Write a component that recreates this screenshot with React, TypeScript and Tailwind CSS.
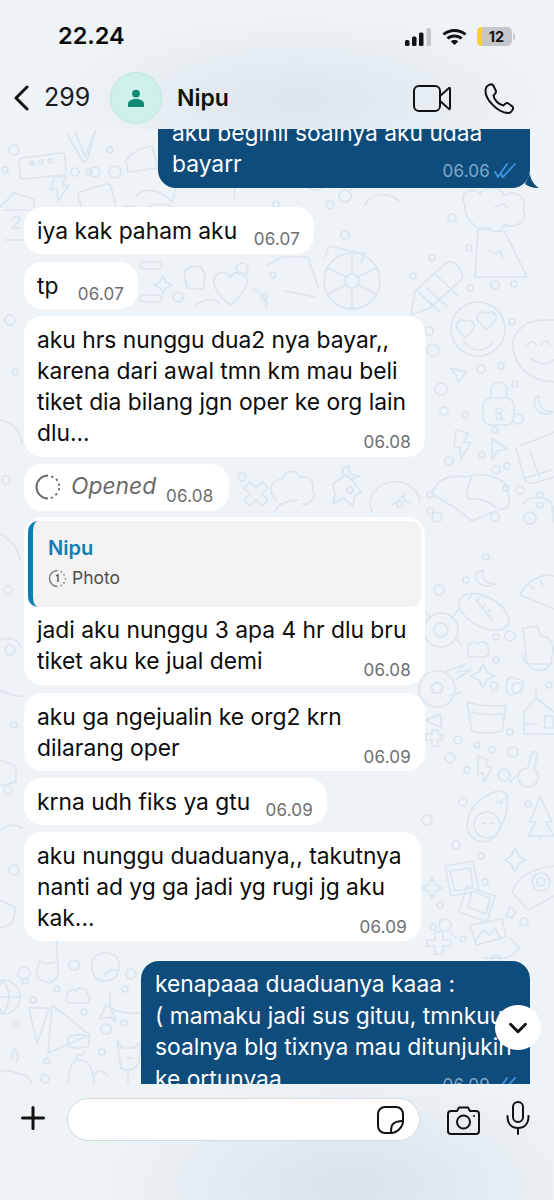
import React from "react";
import { ChevronDown, Plus } from "lucide-react";

const font = "font-['Inter','Noto_Sans',sans-serif]";

// loose circles scattered between the doodles
const dots = [
  [14, 150, 5], [110, 150, 3], [115, 172, 6], [75, 172, 4], [89, 172, 3], [95, 172, 5], [452, 218, 4], [469, 248, 3], [432, 258, 3],
  [413, 276, 3], [495, 285, 4], [514, 284, 3], [470, 288, 3], [512, 322, 3], [429, 331, 4], [433, 350, 6], [481, 369, 4], [501, 366, 3],
  [515, 384, 3], [441, 389, 6], [444, 411, 4], [465, 415, 3], [518, 419, 5], [495, 430, 3], [482, 455, 3], [449, 461, 4], [496, 470, 4],
  [507, 466, 3], [506, 488, 3], [520, 490, 4], [430, 495, 3], [437, 517, 5], [495, 517, 4], [540, 495, 3], [466, 580, 3], [486, 557, 3],
  [439, 590, 5], [510, 636, 5], [496, 637, 3], [496, 660, 3], [494, 686, 4], [517, 688, 5], [549, 685, 3], [458, 740, 4], [510, 732, 3],
  [477, 745, 3], [492, 750, 3], [513, 752, 5], [467, 770, 3], [504, 775, 6], [463, 802, 4], [427, 820, 5], [528, 804, 3], [456, 845, 4],
  [481, 856, 3], [485, 882, 3], [440, 905, 3], [433, 927, 3], [524, 922, 4], [496, 960, 5], [463, 939, 3], [350, 490, 3], [400, 504, 3],
  [242, 477, 4], [430, 511, 3], [555, 510, 3], [5, 170, 3], [24, 973, 6], [74, 965, 5], [25, 981, 3], [57, 989, 3], [33, 1000, 3], [84, 1012, 3],
  [16, 1024, 3], [106, 1029, 5], [124, 1023, 3], [102, 1052, 3], [47, 1061, 3], [45, 1079, 4], [131, 974, 5], [125, 989, 3], [8, 590, 4],
  [10, 650, 5], [14, 725, 3], [8, 790, 4], [14, 870, 5], [6, 480, 4], [15, 372, 3], [10, 320, 5], [330, 205, 4], [276, 204, 3],
  [242, 269, 6], [264, 297, 3], [178, 297, 5], [273, 275, 3], [345, 235, 4],
];

const Doodles = () => (
  <svg className="absolute inset-0" width="554" height="955" viewBox="0 129 554 955" fill="none" stroke="#dae5ee" strokeWidth="1.7" strokeLinecap="round" strokeLinejoin="round">
    {dots.map(([x, y, r], i) => (
      <circle key={i} cx={x} cy={y} r={r} />
    ))}
    {/* right column */}
    <path d="M478 229 L505 232 L527 277 L475 277 Z M489 250 q6 6 11 1 l3 7 M465 205 c-8-12 8-20 15-11 c3-8 22-8 24 2 c10-8 25 2 19 14 c6 12-10 20-18 14 c-2 8-12 10-17 3 c-12 6-24-10-23-22 z M495 208 q7-8 13 0" />
    <path d="M411 315 l4-24 l30-27 c4-3 8-3 12 1 l4 6 c2 3 2 7-1 10 l-30 27 z M418 292 l22 20 M426 288 l22 19 M436 275 l22 21" />
    <circle cx="478" cy="329" r="27" />
    <path d="M464 342 q14 16 30 0 M457 329 c-3-8 6-12 8-7 c4-4 12 0 8 8 l-8 8 z M478 321 c-4-7 5-12 9-7 c4-5 12 0 8 7 l-8 9 z" />
    <path d="M515 356 c-8-20 8-36 28-36 l14 0 M557 382 c-20 0-36-8-42-26 M527 345 q5-7 9 0 M541 345 q5-7 9 0 M530 358 q12 10 24 2" />
    <rect x="483" y="398" width="31" height="27" rx="8" />
    <path d="M491 398 v-8 a8 8 0 0 1 16 0 v8 M499 408 a3 3 0 1 0 .1 0 M499 412 l-3 7 h7 z" />
    <path d="M535 398 c-3 12 8 20 18 14 c-10 0-16-6-14-16 z M456 430 l12 3 l-4 10 l7-1 l-10 17 l-1-12 l-6 1 z M492 438 l15 11 l-9 2 l-6 9 z M450 368 l16 4 l-8 11 l-2-8 z" />
    <path d="M520 446 l34-14 M516 448 l8 30 q2 6 10 5 l20-6 M524 478 l28-8 M530 452 l10 26" />
    <path d="M432 494 c4-16 20-20 34-17 c12-5 30-2 38 6 c6 8 6 20 4 24 l-18 6 l-18 8 l-18-14 z M472 477 c-4 8-6 16-4 22 M468 499 q14-2 28 8" />
    <path d="M522 504 c8-8 18-8 26-4 c8 6 6 16 4 24 M530 512 a6 6 0 1 0 .1 0 M540 502 a3 3 0 1 0 .1 0" />
    <path d="M477 572 c-4 10 6 18 18 12 c-8 0-14-4-12-14 z" />
    <ellipse cx="484" cy="612" rx="27" ry="15" transform="rotate(28 484 612)" />
    <path d="M476 600 l16 20 M480 598 l-3 4 M485 604 l-3 4 M490 610 l-3 4 M471 596 l-3 4" />
    <path d="M520 595 c6-14 24-24 36-18 M520 595 l34 14 M530 585 l4 4 M540 580 l3 6" />
    <circle cx="441" cy="630" r="17" />
    <circle cx="441" cy="630" r="7" />
    <path d="M430 618 l-6-8 M452 618 l6-8 M425 640 l-5 6 M457 640 l5 6" />
    <path d="M468 650 c-2-8 8-10 10-6 c3-4 12-2 10 6 c2 5-2 7-6 7 h-10 c-4 0-6-4-4-7 z M523 628 l14-2 l4 10 c8 0 12 6 12 14 l-2 14 l-24 0 z M522 655 c4 12 18 22 28 10" />
    <circle cx="437" cy="689" r="18" />
    <path d="M431 686 l6-4 l6 4 l-2 7 h-8 z M445 672 l20-8 l-8 8 l14-2 l-16 10 M449 696 l12-4" />
    <path d="M483 664 l4 8 l8 4 l-8 4 l-4 8 l-4-8 l-8-4 l8-4 z M507 684 c-2-6 6-8 8-5 c6-2 10 4 8 8 c-2 6-8 6-10 8 c-6 0-8-6-6-11 z" />
    <path d="M467 702 q20 6 39 3 l-4 26 q-14 4-30 0 z M470 712 q16 4 33 2 M440 714 l-14 6 l16 8 z" />
    <path d="M524 712 l12-14 v-12 M536 698 l18 14 M524 712 v22 h30 M525 724 h12 M525 734 h12 M545 716 h8 v12 h-8 z" />
    <path d="M426 734 h6 v-4 h6 v4 h4 v6 h-4 v6 h-6 v-6 h-6 z M444 758 l6-6 l6 6 l-6 6 z M478 756 l10 4 l-2 6 l6 2 l-8 14 l-1-9 l-5 1 z" />
    <path d="M528 768 l4-16 h6 l-4 18 c6 2 6 12-2 16 c-6 4-14-2-14-10 c0-4 4-8 10-8 M516 776 l-6 6" />
    <path d="M468 818 c4-16 26-30 36-26 c8 4 2 38-14 48 c-14 6-26-6-22-22 z" />
    <circle cx="487" cy="825" r="13" />
    <path d="M482 824 q2-2 4 0 M490 824 q2-2 4 0 M497 802 q3-2 4 2 M505 800 q-3-2-4 4" />
    <path d="M540 796 l12 26 h-6 l8 14 h-14 v4 M540 796 l-10 26 h6 l-8 14 h10" />
    <path d="M515 848 l4 8 l6 4 l-6 4 l-4 8 l-4-8 l-6-4 l6-4 z M432 878 l3 7 l7 3 l-7 3 l-3 7 l-3-7 l-7-3 l7-3 z" />
    <path d="M445 866 l28-5 l6 30 l-28 5 z M450 871 l20-3 l3 20 l-18 3 z M467 886 l28 10 l-8 26 l-28-10 z M472 891 l18 7 l-4 16 l-18-7 z" />
    <path d="M512 892 c6-16 22-24 42-26 M512 892 l16 18 l26-14" />
    <circle cx="541" cy="882" r="9" />
    <circle cx="541" cy="882" r="4" />
    <path d="M510 906 l6 6 l-4 6 l-6-2 z M450 932 l6 6" />
    <circle cx="445" cy="925" r="6" />
    <path d="M470 925 l32-6 l4 18 l-30 8 z M476 940 l7-10 l6 5 l6-7 l5 10 M510 938 l10 10 l-12 10 h-24" />
    <path d="M435 932 h8 v8 h8 v6 h-8 v8 h-8 v-8 h-8 v-6 h8 z" />
    {/* left column and the gaps on top */}
    <path d="M23 158 l38-5 q4 0 4 4 l1 14 q0 4-4 4 l-38 4 q-4 0-4-4 l-1-13 q0-4 4-4 z" />
    <path d="M32 161 a2 2 0 1 0 .1 0 M41 160 a2 2 0 1 0 .1 0 M50 159 a2 2 0 1 0 .1 0" />
    <path d="M67 134 l16 28 l4-2 l8-28 M75 131 l10 26 M95 131 l-10 26" />
    <path d="M54 178 l12-2 l-4 10 l7-1 l-11 16 l-1-12 l-6 1 z M80 192 l26-8 q4-1 5 3 l5 20 q1 4-3 5 l-24 6 q-4 1-5-3 l-6-19 q-1-3 2-4 z" />
    <path d="M0 207 l14-14 l20 6 l0 8 M5 210 h32 v30 h-32 M12 220 q6-8 8 0 l-8 8 h8 M26 218 v8 h6 M31 216 v14" />
    <path d="M136 196 c8-10 26-6 36 6 l6 -22 M140 220 c0-8 8-16 20-16 c14 0 22 8 24 20 M124 206 c8 0 14 0 22 6 M126 160 q10-12 26-14 l6 22 l-30 4 z" />
    <path d="M252 160 v22 h78 M228 172 c6 8 8 16 6 26 M305 184 c6 8 16 8 20 0 M345 190 a6 6 0 1 0 .1 0 M351 190 v-16 l12-2 M365 205 c6-12 24-14 34-4" />
    <path d="M163 276 l3 6 l6 3 l-6 3 l-3 6 l-3-6 l-6-3 l6-3 z M184 272 l7-6 l10 1 l4 8 l-2 14 l-16-1 z" />
    <path d="M230 305 c-14-12-20-22-14-30 c5-5 12-3 14 3 c3-6 10-8 15-3 c6 8-1 18-15 30 z M195 306 c6-6 18-10 25-2 M252 289 c8 2 16 10 14 18" />
    <rect x="140" y="262" width="22" height="7" rx="3.5" />
    <rect x="140" y="295" width="22" height="7" rx="3.5" />
    <circle cx="352" cy="281" r="28" />
    <circle cx="352" cy="281" r="7" />
    <path d="M352 253 v21 M352 288 v21 M328 268 l18 9 M358 285 l18 9 M376 268 l-18 9 M346 285 l-18 9 M268 265 l14-8 l26 0 l10 30 M285 291 l30 6 M325 258 l4-12 l36 8 l-4 8" />
    <path d="M276 500 c-10-10-4-22 6-20 c0-10 16-12 18-2 c8-4 16 4 12 12 c6 8-4 16-10 14 M274 512 c4-8 14-12 24-12 M333 484 l14-10 l14 18 l-6 4 l-2 10 l-10-8 l-10 6 l2-10 z" />
    <path d="M372 512 c-6-14 4-30 22-30 c10-2 26 8 26 20 M392 505 q10-6 12-12 q-2 8 6 10" />
    <path d="M343 468 c-2 8 8 14 16 8 c-8 0-12-4-10-10 z M250 482 l6 6 l6-6 l6 6 l-6 6 l6 6 l-6 6 l-6-6 l-6 6 l-6-6 l6-6 l-6-6 z" />
    <path d="M0 420 c12 2 20 10 22 24 M0 534 c10 4 18 14 20 26 M0 640 c10-4 18 0 22 8 M0 690 c10 4 18 8 22 6 M0 760 l16 6 v16 l-16 4 M0 830 c8-6 16-6 22-2 M0 900 l16 8 l-4 16 l-12 4" />
    {/* bottom left */}
    <circle cx="3" cy="997" r="17" />
    <path d="M-14 997 h34 M3 980 q12 17 0 34 M3 980 q-12 17 0 34" />
    <path d="M29 1008 l20 0 l-12 36 z M52 1005 l38 30 l-42 18 z M68 1038 c4-4 16-4 21-1 v8 c-4 4-16 4-21 1 z" />
    <path d="M67 997 c-2-6 6-9 9-6 c3-5 12-3 11 4 c4 1 4 8-1 8 h-16 c-4 0-5-4-3-6 z M106 1005 c6 4 14 10 36 8 M106 1005 l-6 14 l10-2 l6 4 l-6-14 l0-14" />
    <path d="M94 958 c4-6 14-6 20-3 c6 3 6 14 3 20 c-4 6-14 8-20 4 c-6-5-7-15-3-21 z M104 976 q4-8 14-6" />
    <path d="M38 938 l18 0 l2 30 c0 6 2 8-6 14 c-6 2-14-2-16-8 c0-4 4-10 4-14 M40 962 q8 3 16 0" />
    <path d="M117 1040 l5 8 h12 l7-6 l-2 20 c-4 8-12 10-18 6 z M127 1058 h6 M128 1070 v14" />
    <path d="M68 1084 c0-14 4-24 12-24 c8 0 14 10 14 24 M76 1060 l2-6 l4 2 l2-4 M95 1074 c2-4 10-4 12 2 M0 1072 c6-4 14 0 26 4 c6 4 6 8 4 8 M12 1060 c-2-6 2-10 2-12 c4 6 6 10 2 14" />
  </svg>
);

const Time = ({ children, className = "text-[#6e6e6e]" }: { children: React.ReactNode; className?: string }) => (
  <span className={`text-[17px] leading-[22px] tracking-[0.2px] ${className}`}>{children}</span>
);

const Bubble = ({ className = "", children }: { className?: string; children: React.ReactNode }) => (
  <div className={`bg-white rounded-[18px] text-[22.8px] leading-[31px] text-[#0b0b0b] ${className}`}>{children}</div>
);

const OneLine = ({ text, time, width, mt }: { text: string; time: string; width: string; mt: string }) => (
  <Bubble className={`${width} ${mt} h-[47px] pl-[13px] pr-[14px] flex items-start justify-between`}>
    <span className="mt-[8px]">{text}</span>
    <span className="mt-[14px]">
      <Time>{time}</Time>
    </span>
  </Bubble>
);

const MultiLine = ({ lines, time, width, mt, h }: { lines: string[]; time: string; width: string; mt: string; h: string }) => (
  <Bubble className={`${width} ${mt} ${h} pl-[13px] pr-[14px] pt-[8px]`}>
    {lines.map((l) => (
      <div key={l}>{l}</div>
    ))}
    <div className="float-right -mt-[24px]">
      <Time>{time}</Time>
    </div>
  </Bubble>
);

const Checks = () => (
  <svg width="24" height="16" viewBox="0 0 24 16" fill="none" stroke="#3f93de" strokeWidth="1.8" strokeLinecap="round" className="ml-[4px]">
    <path d="M1 9 l3 5 L13 1 M9 14 L21 1" />
    <path d="M7 11 l1.500 3" />
  </svg>
);

const Tail = () => (
  <svg width="14" height="14" viewBox="0 0 14 14" className="absolute right-[-9px] bottom-0" fill="#0e4c7b">
    <path d="M5 0 C5.500 6 10 12 14 14 C10 14.200 4 13 0 10 Z" />
  </svg>
);

export default function App() {
  return (
    <div className={`${font} relative w-[554px] h-[1200px] overflow-hidden flex flex-col bg-[radial-gradient(ellipse_260px_120px_at_350px_1185px,#d8e2ea,transparent),radial-gradient(ellipse_260px_90px_at_300px_100px,#dce5ec,transparent),linear-gradient(#eef3f6,#eef3f6)]`}>
      {/* status bar */}
      <div className="h-[70px] shrink-0 flex items-start pl-[58px] pt-[21px] pr-[39px] justify-between">
        <span className="text-[23.5px] leading-[30px] font-semibold text-[#0a0a0a]">22.24</span>
        <div className="flex items-center gap-[10px] pt-[6px]">
          <svg width="27" height="18" viewBox="0 0 27 18">
            <rect x="0" y="12" width="4.5" height="6" rx="1.5" fill="#111" />
            <rect x="7" y="8.5" width="4.5" height="9.5" rx="1.5" fill="#111" />
            <rect x="14" y="4.5" width="4.5" height="13.5" rx="1.5" fill="#111" />
            <rect x="21.5" y="0" width="4.5" height="18" rx="1.5" fill="#c2c6ca" />
          </svg>
          <svg width="25" height="18" viewBox="0 0 25 18" fill="none" stroke="#111" strokeWidth="3">
            <path d="M1.500 6.500 C7.500 1 17.500 1 23.500 6.500" />
            <path d="M5.500 10.500 C9 7 16 7 19.500 10.500" />
            <path d="M12.500 17 L8.800 13.500 C10.500 11.600 14.500 11.600 16.200 13.500 Z" fill="#111" stroke="none" />
          </svg>
          <div className="flex items-center">
            <div className="w-[35px] h-[19px] rounded-[5px] bg-[#c4c6c9] overflow-hidden flex items-center">
              <div className="w-[5px] h-full bg-[#fdd02e]" />
              <span className="flex-1 text-center text-[14.5px] font-bold text-[#111] leading-[19px] pr-[1px]">12</span>
            </div>
            <div className="w-[2px] h-[7px] ml-[1px] rounded-r-[2px] bg-[#c4c6c9]" />
          </div>
        </div>
      </div>

      {/* chat header */}
      <div className="h-[59px] shrink-0 flex items-center pl-[13px] pr-[40px] pb-[3px]">
        <svg width="16" height="26" viewBox="0 0 16 26" fill="none" stroke="#111" strokeWidth="3" strokeLinecap="round" strokeLinejoin="round" className="shrink-0">
          <path d="M14 2 L3 13 L14 24" />
        </svg>
        <span className="text-[25px] text-[#1c1c1c] ml-[15px] w-[42px]">299</span>
        <div className="ml-[24px] w-[52px] h-[52px] rounded-full bg-[#cdf1ea] border border-[#bde5de] flex items-center justify-center">
          <svg width="18" height="18" viewBox="0 0 18 18" fill="#108a74">
            <circle cx="9" cy="4.600" r="3.900" />
            <path d="M1 18 v-3 c0-3.500 4-5 8-5 s8 1.500 8 5 v3 z" />
          </svg>
        </div>
        <span className="ml-[15px] text-[23px] font-semibold text-[#101010]">Nipu</span>
        <div className="ml-auto flex items-center gap-[33px]">
          <svg width="38" height="27" viewBox="0 0 38 27" fill="none" stroke="#111" strokeWidth="2">
            <rect x="1" y="1" width="26" height="25" rx="5" />
            <path d="M27 11 L36 3 q1-.6 1 1 V23 q0 1.600-1 1 L27 16" />
          </svg>
          <svg width="30" height="31" viewBox="0 0 30 31" fill="none" stroke="#111" strokeWidth="2" strokeLinejoin="round">
            <path d="M2 5 C3 2 7 0.500 9 2 L12 8 C12.500 10 11 11 9.500 12.500 C10 17 15 22 19.500 22.500 C21 21 22 19.500 24 20.200 L28.500 23.500 C30 25.500 28 29 25 30 C14 30.500 -1 15 2 5 Z" />
          </svg>
        </div>
      </div>

      {/* messages */}
      <div className="relative h-[955px] shrink-0 overflow-hidden bg-[#eef3f7]">
        <Doodles />
        <div className="relative flex flex-col pl-[24px]">
          <div className="relative ml-[134px] w-[372px] h-[71px] -mt-[12px] rounded-b-[18px] bg-[#0e4c7b] text-white text-[22.8px] leading-[31px] pl-[14px]">
            <div>aku beginii soalnya aku udaa</div>
            <div>bayarr</div>
            <div className="absolute right-[12px] bottom-[6px] flex items-center">
              <Time className="text-[#7fa9c9]">06.06</Time>
              <Checks />
            </div>
            <Tail />
          </div>
          <OneLine text="iya kak paham aku" time="06.07" width="w-[290px]" mt="mt-[19px]" />
          <OneLine text="tp" time="06.07" width="w-[114px]" mt="mt-[8px]" />
          <MultiLine
            lines={["aku hrs nunggu dua2 nya bayar,,", "karena dari awal tmn km mau beli", "tiket dia bilang jgn oper ke org lain", "dlu..."]}
            time="06.08"
            width="w-[401px]"
            mt="mt-[7px]"
            h="h-[141px]"
          />
          <Bubble className="w-[205px] h-[47px] mt-[7px] pl-[11px] flex items-start">
            <svg width="26" height="26" viewBox="0 0 26 26" fill="none" stroke="#6a6a6a" strokeWidth="2" className="mt-[10px] shrink-0">
              <path d="M13 1.500 A11.500 11.500 0 0 0 13 24.500" />
              <path d="M17 2.500 L17.500 3 M21.500 5.500 L22 6 M24 10.500 V11 M24 15 V15.500 M21.500 20 L21 20.500 M17 23.500 L16.500 23.800" strokeLinecap="round" />
            </svg>
            <span className="ml-[10px] mt-[6px] italic text-[#6a6a6a]">Opened</span>
            <span className="ml-[10px] mt-[14px]">
              <Time>06.08</Time>
            </span>
          </Bubble>
          <Bubble className="w-[401px] h-[168px] mt-[6px] pl-[4px] pr-[4px] pt-[4px]">
            <div className="h-[86px] bg-[#f4f2f3] rounded-[10px] border-l-[5px] border-[#0a7fb5] pl-[15px] pt-[13px]">
              <div className="text-[20px] leading-[28px] font-semibold text-[#0a7fb5]">Nipu</div>
              <div className="flex items-center mt-[4px] text-[#4e4e4e] text-[17.5px] leading-[24px]">
                <svg width="19" height="19" viewBox="0 0 19 19" fill="none" stroke="#7a7a7a" strokeWidth="1.400">
                  <path d="M9.500 1.500 A8 8 0 0 0 9.500 17.500" />
                  <path d="M13 2.500 L13.400 2.800 M16 5.500 V6 M17.500 9.500 V10 M16 13.500 V14 M13 16.500 L13.400 16.200" strokeLinecap="round" />
                  <path d="M8 7 L10 5.800 V13" stroke="#555" />
                </svg>
                <span className="ml-[5px]">Photo</span>
              </div>
            </div>
            <div className="pl-[9px] pr-[10px] pt-[7px]">
              <div>jadi aku nunggu 3 apa 4 hr dlu bru</div>
              <div>tiket aku ke jual demi</div>
              <div className="float-right -mt-[24px]">
                <Time>06.08</Time>
              </div>
            </div>
          </Bubble>
          <MultiLine lines={["aku ga ngejualin ke org2 krn", "dilarang oper"]} time="06.09" width="w-[401px]" mt="mt-[8px]" h="h-[78px]" />
          <OneLine text="krna udh fiks ya gtu" time="06.09" width="w-[303px]" mt="mt-[7px]" />
          <MultiLine lines={["aku nunggu duaduanya,, takutnya", "nanti ad yg ga jadi yg rugi jg aku", "kak..."]} time="06.09" width="w-[397px]" mt="mt-[7px]" h="h-[109px]" />
          <div className="relative ml-[117px] w-[389px] h-[140px] mt-[20px] rounded-t-[18px] bg-[#0e4c7b] text-white text-[22.8px] leading-[31.5px] pl-[14px] pt-[7px]">
            <div>kenapaaa duaduanya kaaa :</div>
            <div>( mamaku jadi sus gituu, tmnkuu</div>
            <div>soalnya blg tixnya mau ditunjukin</div>
            <div>ke ortunyaa</div>
            <div className="absolute right-[12px] top-[113px] flex items-center">
              <Time className="text-[#7fa9c9]">06.09</Time>
              <Checks />
            </div>
          </div>
        </div>
        <div className="absolute left-[495px] top-[876px] w-[46px] h-[45px] rounded-full bg-white flex items-center justify-center">
          <ChevronDown size={30} strokeWidth={2.4} className="text-[#111]" />
        </div>
      </div>

      {/* input bar */}
      <div className="flex items-start pt-[14px] pl-[15px]">
        <Plus size={36} strokeWidth={2} className="text-[#111] mt-[2px]" />
        <div className="ml-[16px] w-[353px] h-[43px] rounded-full bg-white border border-[#d3d9dd] flex items-center justify-end pr-[15px]">
          <svg width="27" height="28" viewBox="0 0 27 28" fill="none" stroke="#111" strokeWidth="2" strokeLinejoin="round">
            <path d="M26 15 V8 C26 4 23 1 19 1 H8 C4 1 1 4 1 8 V20 C1 24 4 27 8 27 H14 C20 27 26 21 26 15 Z" />
            <path d="M14 27 C14 23 14 21 15.500 18.500 C18 15.500 22 15 26 15" />
          </svg>
        </div>
        <svg width="33" height="29" viewBox="0 0 33 29" fill="none" stroke="#111" strokeWidth="2" className="ml-[27px] mt-[8px]" strokeLinejoin="round">
          <path d="M4 5 H10 L12 1.500 H21 L23 5 H29 Q32 5 32 8 V25 Q32 28 29 28 H4 Q1 28 1 25 V8 Q1 5 4 5 Z" />
          <circle cx="16.500" cy="16" r="6.500" />
          <circle cx="27" cy="10" r="1" fill="#111" stroke="none" />
        </svg>
        <svg width="24" height="34" viewBox="0 0 24 34" fill="none" stroke="#111" strokeWidth="2" strokeLinecap="round" className="ml-[26px] mt-[3px]">
          <rect x="7" y="1" width="10" height="20" rx="5" />
          <path d="M1.500 15 C1.500 23 6 27 12 27 S22.500 23 22.500 15 M12 27 V33" />
        </svg>
      </div>
    </div>
  );
}
